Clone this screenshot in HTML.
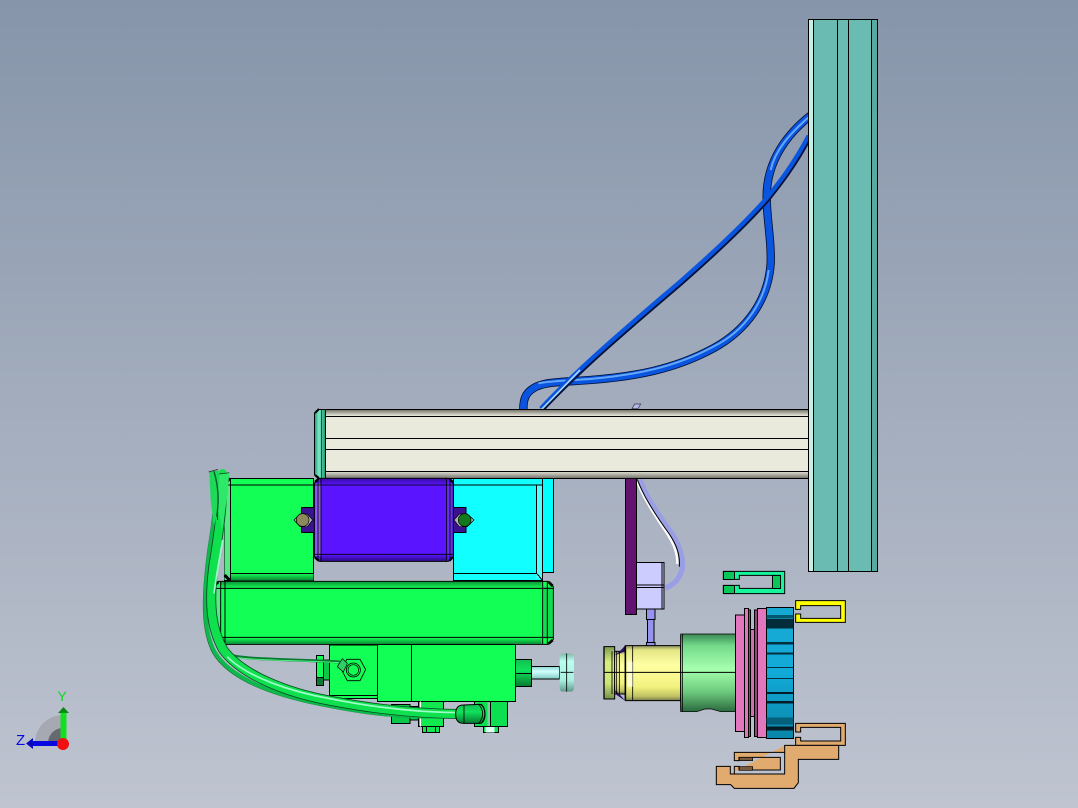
<!DOCTYPE html>
<html><head><meta charset="utf-8"><style>
html,body{margin:0;padding:0;width:1078px;height:808px;overflow:hidden}
svg{display:block}
text{font-family:"Liberation Sans",sans-serif}
</style></head><body>
<svg width="1078" height="808" viewBox="0 0 1078 808" xmlns="http://www.w3.org/2000/svg">
<defs>
<linearGradient id="bg" x1="0" y1="0" x2="0" y2="1"><stop offset="0" stop-color="#8695aa"/><stop offset="1" stop-color="#bfc4d0"/></linearGradient>
<linearGradient id="beamT" x1="0" y1="0" x2="0" y2="1"><stop offset="0" stop-color="#77776f"/><stop offset="1" stop-color="#e9e9dc"/></linearGradient>
<linearGradient id="beamB" x1="0" y1="0" x2="0" y2="1"><stop offset="0" stop-color="#e9e9dc"/><stop offset="1" stop-color="#77776f"/></linearGradient>
<linearGradient id="cap" x1="0" y1="0" x2="1" y2="0"><stop offset="0" stop-color="#1a9a78"/><stop offset=".4" stop-color="#7fe8c4"/><stop offset="1" stop-color="#129a72"/></linearGradient>
<linearGradient id="yel" x1="0" y1="0" x2="0" y2="1"><stop offset="0" stop-color="#8a8f5c"/><stop offset=".08" stop-color="#e4e684"/><stop offset=".35" stop-color="#ffffa4"/><stop offset=".75" stop-color="#f2f27e"/><stop offset=".92" stop-color="#c0c264"/><stop offset="1" stop-color="#75784a"/></linearGradient>
<linearGradient id="yel2" x1="0" y1="0" x2="0" y2="1"><stop offset="0" stop-color="#7f9a50"/><stop offset=".3" stop-color="#d8ee80"/><stop offset=".7" stop-color="#cce47a"/><stop offset="1" stop-color="#74914c"/></linearGradient>
<linearGradient id="grn" x1="0" y1="0" x2="0" y2="1"><stop offset="0" stop-color="#3a8a55"/><stop offset=".15" stop-color="#74d98a"/><stop offset=".45" stop-color="#a6ffaf"/><stop offset=".75" stop-color="#6cc97c"/><stop offset="1" stop-color="#2a6a40"/></linearGradient>
<linearGradient id="blu" x1="0" y1="0" x2="0" y2="1"><stop offset="0" stop-color="#17a8d2"/><stop offset=".5" stop-color="#12aad8"/><stop offset="1" stop-color="#0a86a8"/></linearGradient>
<linearGradient id="disc" x1="0" y1="0" x2="0" y2="1"><stop offset="0" stop-color="#7fb8a8"/><stop offset=".2" stop-color="#b8fff0"/><stop offset=".7" stop-color="#a8f0e0"/><stop offset="1" stop-color="#5f9a8a"/></linearGradient>
<linearGradient id="rod" x1="0" y1="0" x2="0" y2="1"><stop offset="0" stop-color="#8fd8d0"/><stop offset=".4" stop-color="#d0ffff"/><stop offset="1" stop-color="#80c8c0"/></linearGradient>
<linearGradient id="nut" x1="0" y1="0" x2="0" y2="1"><stop offset="0" stop-color="#10c050"/><stop offset=".4" stop-color="#10e25c"/><stop offset="1" stop-color="#067a30"/></linearGradient>
<linearGradient id="gT" x1="0" y1="0" x2="0" y2="1"><stop offset="0" stop-color="#0c9a3a"/><stop offset="1" stop-color="#12ff55"/></linearGradient>
<linearGradient id="gB" x1="0" y1="0" x2="0" y2="1"><stop offset="0" stop-color="#12ff55"/><stop offset="1" stop-color="#0a8a35"/></linearGradient>
<linearGradient id="pT" x1="0" y1="0" x2="0" y2="1"><stop offset="0" stop-color="#3a0ca8"/><stop offset="1" stop-color="#5a14ff"/></linearGradient>
<linearGradient id="pB" x1="0" y1="0" x2="0" y2="1"><stop offset="0" stop-color="#5a14ff"/><stop offset="1" stop-color="#2a0a80"/></linearGradient>
</defs>
<rect width="1078" height="808" fill="url(#bg)"/>

<!-- blue cables -->
<g transform="translate(500 0) scale(.33333)" fill="none" stroke-linecap="butt">
<path d="M935 344C865 398 800 480 800 590C800 660 815 720 812 790C805 900 740 990 640 1045C520 1110 400 1130 270 1140C180 1147 130 1145 100 1165C75 1180 70 1200 70 1228" stroke="#03103a" stroke-width="25"/>
<path d="M935 344C865 398 800 480 800 590C800 660 815 720 812 790C805 900 740 990 640 1045C520 1110 400 1130 270 1140C180 1147 130 1145 100 1165C75 1180 70 1200 70 1228" stroke="#0a55e0" stroke-width="20"/>
<path d="M930 348C870 400 825 450 812 510M806 810C795 900 740 990 640 1040C520 1105 400 1125 270 1137C200 1142 150 1143 115 1150" stroke="#66a8f8" stroke-width="6"/>
<path d="M928 410C884 494 840 550 800 600C720 690 620 780 540 850C400 970 250 1095 125 1228" stroke="#03103a" stroke-width="17"/>
<path d="M926 407C882 491 838 547 798 597C718 687 618 777 538 847C398 967 248 1092 123 1225" stroke="#0a55e0" stroke-width="13"/>
<path d="M240 1110L125 1228" stroke="#a8d8ff" stroke-width="5"/>
<path d="M396 1226L404 1212H422L414 1226Z" fill="#b8b8f0" stroke="#333" stroke-width="2"/>
</g>

<!-- rail -->
<g shape-rendering="crispEdges">
<rect x="808" y="19" width="70" height="553" fill="#6abcb3"/>
<rect x="809" y="20" width="4" height="551" fill="#c8efe6"/>
<rect x="872" y="20" width="5" height="551" fill="#5aa9a0"/>
<path d="M808.5 19.5H877.5V571.5H808.5ZM813.5 20V571M837.5 20V571M848.5 20V571M871.5 20V571" fill="none" stroke="#000"/>
</g>

<!-- wire to switch -->
<g transform="translate(590 470) scale(.33333)" fill="none">
<path d="M150 28C168 80 208 140 246 190C270 230 282 270 276 300C266 332 245 348 225 354" stroke="#9a9ee4" stroke-width="16"/>
<path d="M139 28C157 80 195 137 232 192C254 227 262 250 262 282" stroke="#fff" stroke-width="7"/>
<path d="M142 28C160 80 200 140 240 195C262 230 270 255 268 290" stroke="#000" stroke-width="3"/>
</g>

<!-- beam -->
<g shape-rendering="crispEdges">
<rect x="320" y="409" width="488" height="70" fill="#e9e9dc"/>
<rect x="320" y="410" width="488" height="6" fill="url(#beamT)"/>
<rect x="320" y="471" width="488" height="7" fill="url(#beamB)"/>
<path d="M318 409.5H808M325 416.5H808M325 438.5H808M325 449.5H808M325 471.5H808M318 478.5H808" stroke="#000" fill="none"/>
</g>
<path d="M318 409.5H325.5V478.5H318L314.5 475V413Z" fill="url(#cap)" stroke="#000"/>
<path d="M321.5 410V478" stroke="#0a5a44"/>
<path d="M315 413l4-4M315 475l4 3" stroke="#000" stroke-width="2"/>

<!-- left group -->
<g transform="translate(190 460) scale(.33333)" stroke="#000" stroke-width="3">
<g shape-rendering="crispEdges">
<!-- cyan -->
<rect x="1040" y="56" width="50" height="281" fill="#0ff" />
<rect x="790" y="55" width="267" height="306" fill="#12ffff"/>
<rect x="1040" y="76" width="17" height="280" fill="#5ff" stroke="none"/>
<path d="M1040 75V340L1057 361M1057 55V361M790 340H1040M790 75H1057" fill="none"/>
<!-- green left -->
<rect x="104" y="55" width="267" height="307" fill="#12ff55"/>
<rect x="104" y="57" width="18" height="303" fill="#58e886" stroke="none"/>
<rect x="122" y="340" width="248" height="21" fill="url(#gB)" stroke="none"/>
<path d="M122 55V362M104 75H371M122 340H371" fill="none"/>
</g>
<path d="M104 72L120 55M104 345L120 362" stroke-width="9"/>
<!-- ears -->
<g shape-rendering="crispEdges">
<rect x="334" y="142" width="40" height="76" fill="#3a1490"/>
<rect x="787" y="142" width="41" height="76" fill="#3a1490"/>
</g>
<path d="M312 180L330 162H352L368 180L352 200H330Z" fill="#b0b0b8" stroke-width="2"/>
<path d="M792 180L808 162H832L852 180L832 200H808Z" fill="#b0b0b8" stroke-width="2"/>
<circle cx="338" cy="180" r="19" fill="#8c8a5c" stroke-width="2"/>
<circle cx="824" cy="180" r="19" fill="#127a1c" stroke-width="2"/>
<!-- purple -->
<path d="M388 55H775L790 70V290L775 304H388L373 290V70Z" fill="#5a14ff"/>
<g stroke="none" shape-rendering="crispEdges">
<rect x="390" y="57" width="380" height="18" fill="url(#pT)"/>
<rect x="390" y="284" width="380" height="19" fill="url(#pB)"/>
<rect x="375" y="70" width="18" height="218" fill="#8c5af0"/>
<rect x="770" y="70" width="18" height="218" fill="#6a30f0"/>
</g>
<path d="M393 55V304M770 55V304M373 75H790M373 283H790M384 55V304M780 55V304" fill="none" stroke-width="2.5"/>
<path d="M375 66L386 56M778 56L788 66M375 292L386 302M778 302L788 292" stroke-width="7"/>
<!-- big green -->
<path d="M85 364H1075L1090 380V538L1075 553H85L70 538V380Z" fill="#12ff55"/>
<g stroke="none" shape-rendering="crispEdges">
<rect x="90" y="366" width="965" height="19" fill="url(#gT)"/>
<rect x="90" y="533" width="965" height="19" fill="url(#gB)"/>
<rect x="72" y="380" width="20" height="155" fill="#58e886"/>
<rect x="1060" y="380" width="28" height="155" fill="#10dc50"/>
</g>
<path d="M92 364V553M105 364V553M1058 364V553M1072 364V553M70 385H1090M70 532H1090" fill="none"/>
<path d="M74 375L85 366M1076 366L1088 378M74 540L85 551M1076 551L1088 540" stroke-width="8"/>
<!-- lower blocks -->
<g shape-rendering="crispEdges">
<rect x="380" y="586" width="21" height="91" fill="#12ff55"/>
<rect x="380" y="652" width="21" height="25" fill="#0a7a30"/>
<rect x="400" y="600" width="18" height="60" fill="#0cc84a"/>
<rect x="418" y="555" width="145" height="160" fill="#12ff55"/>
<path d="M418 706H563" fill="none"/>
<rect x="422" y="715" width="55" height="18" fill="#38e878"/>
<rect x="563" y="553" width="414" height="171" fill="#12ff55"/>
<path d="M665 553V724" fill="none"/>
<rect x="977" y="598" width="48" height="82" fill="url(#nut)"/>
<path d="M977 640H1025" fill="none"/>
<rect x="1025" y="620" width="84" height="37" fill="url(#rod)"/>
<rect x="604" y="734" width="56" height="56" fill="#0cc84a"/>
<rect x="660" y="740" width="25" height="40" fill="#0cc84a"/>
<rect x="685" y="724" width="76" height="76" fill="#12e850"/>
<path d="M691 724V800" stroke="#fff" stroke-width="3"/>
<path d="M685 724V800" fill="none"/>
<rect x="697" y="800" width="52" height="18" fill="#12e850"/>
<path d="M710 800V818M736 800V818" fill="none"/>
<rect x="853" y="724" width="100" height="76" fill="#0ce050"/>
<rect x="880" y="800" width="46" height="18" fill="#12e850"/>
<rect x="887" y="801" width="27" height="16" fill="#d8fff0" stroke="none"/>
<rect x="893" y="726" width="8" height="72" fill="#7ad09a" stroke="none"/>
<path d="M901 724V800" fill="none"/>
</g>
<path d="M1109 593Q1109 582 1120 580H1140Q1152 582 1152 593V684Q1152 695 1140 695H1120Q1109 695 1109 684Z" fill="url(#disc)" stroke="none"/>
<path d="M1112 637H1150M1130 580V695" fill="none" stroke-width="2.5"/>
<!-- hex -->
<path d="M488 598H510L527 629L510 662H472L456 632L470 598Z" fill="none" stroke-width="2.5"/>
<circle cx="490" cy="630" r="21" fill="#12ff55" stroke-width="2.5"/>
<circle cx="490" cy="630" r="16" fill="#12ff55" stroke-width="2"/>
<!-- thin wire -->
<path d="M110 582C150 600 320 598 450 606" fill="none" stroke="#0a7a30" stroke-width="9"/>
<path d="M110 586C150 602 320 600 450 608" fill="none" stroke="#4ef08a" stroke-width="3"/>
<path d="M442 620L457 596L472 610L460 636Z" fill="#30d068" stroke-width="2"/>
<!-- big hose -->
<path d="M70 32C92 120 70 200 60 280C45 400 40 500 75 570C120 650 250 700 400 730C510 752 620 772 810 765" fill="none" stroke="#0a5a2a" stroke-width="8" transform="translate(-6 5)"/>
<path d="M70 32C92 120 70 200 60 280C45 400 40 500 75 570C120 650 250 700 400 730C510 752 620 772 810 765" fill="none" stroke="#0fb84a" stroke-width="12" transform="translate(-3 3)"/>
<path d="M98 40C100 120 85 230 70 320C58 420 60 500 100 570C160 650 300 700 420 722C540 745 680 762 820 762" fill="none" stroke="#0a4a24" stroke-width="30"/>
<path d="M98 40C100 120 85 230 70 320C58 420 60 500 100 570C160 650 300 700 420 722C540 745 680 762 820 762" fill="none" stroke="#0ee04e" stroke-width="25" stroke-linecap="round"/>
<path d="M98 240C88 300 80 340 72 400M112 590C170 650 300 695 420 716C540 740 680 758 815 758" fill="none" stroke="#a0ffc8" stroke-width="5"/>
<path d="M70 32C78 90 85 130 82 180" fill="none" stroke="#000" stroke-width="2"/>
<path d="M58 36L85 30L96 100L72 200L62 120Z" fill="#1ed85a" stroke="none"/>
<path d="M88 40L118 38L112 110L96 210L84 140Z" fill="#2ee86a" stroke="none"/>
<path d="M72 34C85 80 88 120 80 170" fill="none" stroke="#065a28" stroke-width="4"/>
<path d="M56 36L84 28M88 42L118 38" fill="none" stroke="#222" stroke-width="2"/>
<!-- fitting -->
<path d="M820 735Q797 735 797 762Q797 790 820 790H870C890 790 890 735 870 733Z" fill="url(#nut)"/>
<path d="M822 735V790M866 732Q890 762 866 790M874 732Q895 762 874 790" fill="none" stroke-width="2.5"/>
</g>

<!-- right group -->
<g transform="translate(590 470) scale(.33333)" stroke="#000" stroke-width="3">
<g shape-rendering="crispEdges">
<rect x="106" y="26" width="34" height="407" fill="#62126f"/>
<rect x="140" y="277" width="82" height="140" fill="#ccccff"/>
<path d="M216 277V417M140 345H222M140 352H222" fill="none"/>
<rect x="170" y="417" width="25" height="32" fill="#9494f0"/>
<rect x="172" y="449" width="20" height="68" fill="#9494f0"/>
<rect x="170" y="517" width="25" height="12" fill="#9090e0"/>
</g>
<!-- yellow piston -->
<path d="M42 530H74V687H42Z" fill="url(#yel2)"/>
<rect x="74" y="544" width="33" height="128" fill="url(#yel)"/>
<path d="M107 527H272V692H107Z" fill="url(#yel)"/>
<path d="M74 556Q90 545 105 527V544L74 556ZM74 660Q90 672 105 692L80 675Z" fill="#2a0f60" stroke="none"/>
<path d="M66 544V672M80 545V672M88 545V672M105 526V692M128 526V692" fill="none" stroke-width="2.5"/>
<path d="M42 530V687" fill="none" stroke-width="4"/>
<rect x="112" y="575" width="16" height="75" fill="#ffffe0" stroke="none" opacity=".8"/>
<!-- green cyl -->
<path d="M272 492H436V725H392L365 717H345L320 725H272Z" fill="url(#grn)" stroke-width="2"/>
<path d="M272 495V722M277 492V725" fill="none" stroke-width="2.5"/>
<path d="M42 607H436" fill="none" stroke-width="3"/>
<!-- pink -->
<g shape-rendering="crispEdges">
<rect x="436" y="435" width="27" height="350" fill="#e377bd"/>
<rect x="463" y="415" width="12" height="388" fill="#e377bd"/>
<rect x="475" y="420" width="7" height="380" fill="#8c4a78"/>
<rect x="482" y="478" width="12" height="262" fill="#d270b0"/>
<rect x="494" y="420" width="8" height="380" fill="#8c4a78"/>
<rect x="502" y="415" width="27" height="388" fill="#e377bd"/>
<!-- blue -->
<rect x="529" y="412" width="82" height="394" fill="url(#blu)"/>
<g stroke="none">
<rect x="530" y="435" width="80" height="10" fill="#04586e"/>
<rect x="530" y="447" width="80" height="28" fill="#032c3a"/>
<rect x="530" y="516" width="80" height="8" fill="#023040"/>
<rect x="530" y="547" width="80" height="6" fill="#023040"/>
<rect x="530" y="591" width="80" height="3" fill="#023040"/>
<rect x="530" y="624" width="80" height="3" fill="#023040"/>
<rect x="530" y="666" width="80" height="6" fill="#021c28"/>
<rect x="530" y="693" width="80" height="7" fill="#021c28"/>
<rect x="530" y="742" width="80" height="22" fill="#05607c"/>
<rect x="530" y="770" width="80" height="12" fill="#021c28"/>
</g>
</g>
<!-- clips -->
<path d="M400 304H584V371H400V346H448V355H571V316H448V328H400Z" fill="#17f59c"/>
<g shape-rendering="crispEdges">
<rect x="400" y="304" width="33" height="24" fill="#0ac858"/>
<rect x="400" y="346" width="33" height="24" fill="#0ac858"/>
<rect x="548" y="316" width="23" height="39" fill="#0ac858"/>
</g>
<path d="M617 392H766V457H617V432H632V445H752V407H632V418H617Z" fill="#ffff00"/>
<path d="M617 760H766V826H617V802H632V813H752V772H632V786H617Z" fill="#e1aa6e"/>
<path d="M584 826H746V868H625V938L612 955H433L422 944H379V889H421V912H584V847H433V872H447V862H571V900H447V889H433V912H421" fill="#e1aa6e" stroke="none"/>
<path d="M584 847V826H746V868H625V938L612 955H433L422 944H379V889H421V912H584V847H433V872H447V862H571V900H447V889H433V912" fill="none"/>
<rect x="448" y="862" width="40" height="10" fill="#7a5a3c" stroke-width="2"/>
<rect x="448" y="890" width="40" height="11" fill="#7a5a3c" stroke-width="2"/>
</g>

<!-- axis triad -->
<path d="M63 743L35 743A28 28 0 0 1 63 715Z" fill="#a6a9b1"/>
<path d="M63 743L48 743A15 15 0 0 1 63 728Z" fill="#66696f"/>
<rect x="60.5" y="711" width="6" height="32" fill="#10e020"/>
<path d="M58 713L63.500 707L69 713Z" fill="#0a8a10"/>
<rect x="33" y="741" width="30" height="5" fill="#0808e0"/>
<path d="M33 738L26 743.500L33 749Z" fill="#0808c0"/>
<circle cx="63" cy="744" r="6" fill="#f01010"/>
<text x="57.500" y="701" font-size="14" fill="#10d820">Y</text>
<text x="16" y="745" font-size="15" fill="#0808e0">Z</text>
</svg>
</body></html>
